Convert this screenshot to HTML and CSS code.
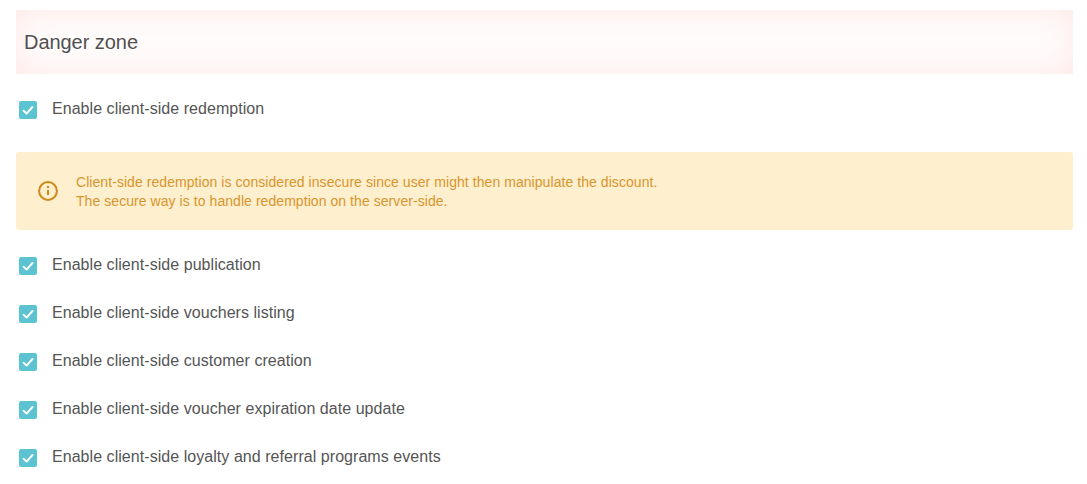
FILE: index.html
```html
<!DOCTYPE html>
<html lang="en">
<head>
<meta charset="utf-8">
<title>Danger zone</title>
<link rel="stylesheet" href="styles.css">
</head>
<body>
<main class="page">
  <h2 class="zone">Danger zone</h2>
  <label class="row first"><span class="box"><svg viewBox="0 0 18 18"><path d="M4.6 9.8 7.6 12.6 13.4 6"/></svg></span>Enable client-side redemption</label>
  <div class="alert">
    <svg class="info" viewBox="0 0 20 20"><circle cx="10" cy="10" r="8.9"/><path d="M10 9v5"/><circle class="dot" cx="10" cy="6" r="1.2"/></svg>
    <p>Client-side redemption is considered insecure since user might then manipulate the discount.<br>The secure way is to handle redemption on the server-side.</p>
  </div>
  <label class="row"><span class="box"><svg viewBox="0 0 18 18"><path d="M4.6 9.8 7.6 12.6 13.4 6"/></svg></span>Enable client-side publication</label>
  <label class="row"><span class="box"><svg viewBox="0 0 18 18"><path d="M4.6 9.8 7.6 12.6 13.4 6"/></svg></span>Enable client-side vouchers listing</label>
  <label class="row"><span class="box"><svg viewBox="0 0 18 18"><path d="M4.6 9.8 7.6 12.6 13.4 6"/></svg></span>Enable client-side customer creation</label>
  <label class="row"><span class="box"><svg viewBox="0 0 18 18"><path d="M4.6 9.8 7.6 12.6 13.4 6"/></svg></span>Enable client-side voucher expiration date update</label>
  <label class="row"><span class="box"><svg viewBox="0 0 18 18"><path d="M4.6 9.8 7.6 12.6 13.4 6"/></svg></span>Enable client-side loyalty and referral programs events</label>
</main>
</body>
</html>
```
FILE: styles.css
```css
html, body { margin: 0; padding: 0; background: #fff; }
body { font-family: "Liberation Sans", Arial, sans-serif; color: #555; }
.page { padding: 10px 14px 0 16px; }
.zone {
  margin: 0;
  height: 64px;
  line-height: 65px;
  padding-left: 8px;
  font-size: 20px;
  font-weight: 400;
  letter-spacing: -0.05px;
  color: #505050;
  background: #fffbfb;
  box-shadow: inset 0 0 30px #ffe8e8;
}
.row {
  display: flex;
  align-items: center;
  height: 24px;
  margin: 0 0 24px 3px;
  font-size: 16px;
  letter-spacing: 0.05px;
  line-height: 24px;
}
.row.first { margin-top: 23px; margin-bottom: 31px; }
.box {
  flex: none;
  width: 18px;
  height: 18px;
  margin-right: 15px;
  margin-top: 2px;
  border-radius: 2px;
  background: #5bc4d0;
}
.box svg { display: block; width: 18px; height: 18px; fill: none; stroke: #fff; stroke-width: 2; stroke-linecap: round; stroke-linejoin: round; }
.alert {
  display: flex;
  align-items: center;
  height: 78px;
  margin-bottom: 23px;
  padding-left: 22px;
  border-radius: 3px;
  background: #feefcf;
  color: #d9952b;
}
.info { flex: none; width: 20px; height: 20px; margin-right: 18px; fill: none; stroke: #d08a17; stroke-width: 2; }
.info .dot { fill: #d08a17; stroke: none; }
.alert p { margin: 1px 0 0; font-size: 14px; letter-spacing: 0.06px; line-height: 19px; }
```
